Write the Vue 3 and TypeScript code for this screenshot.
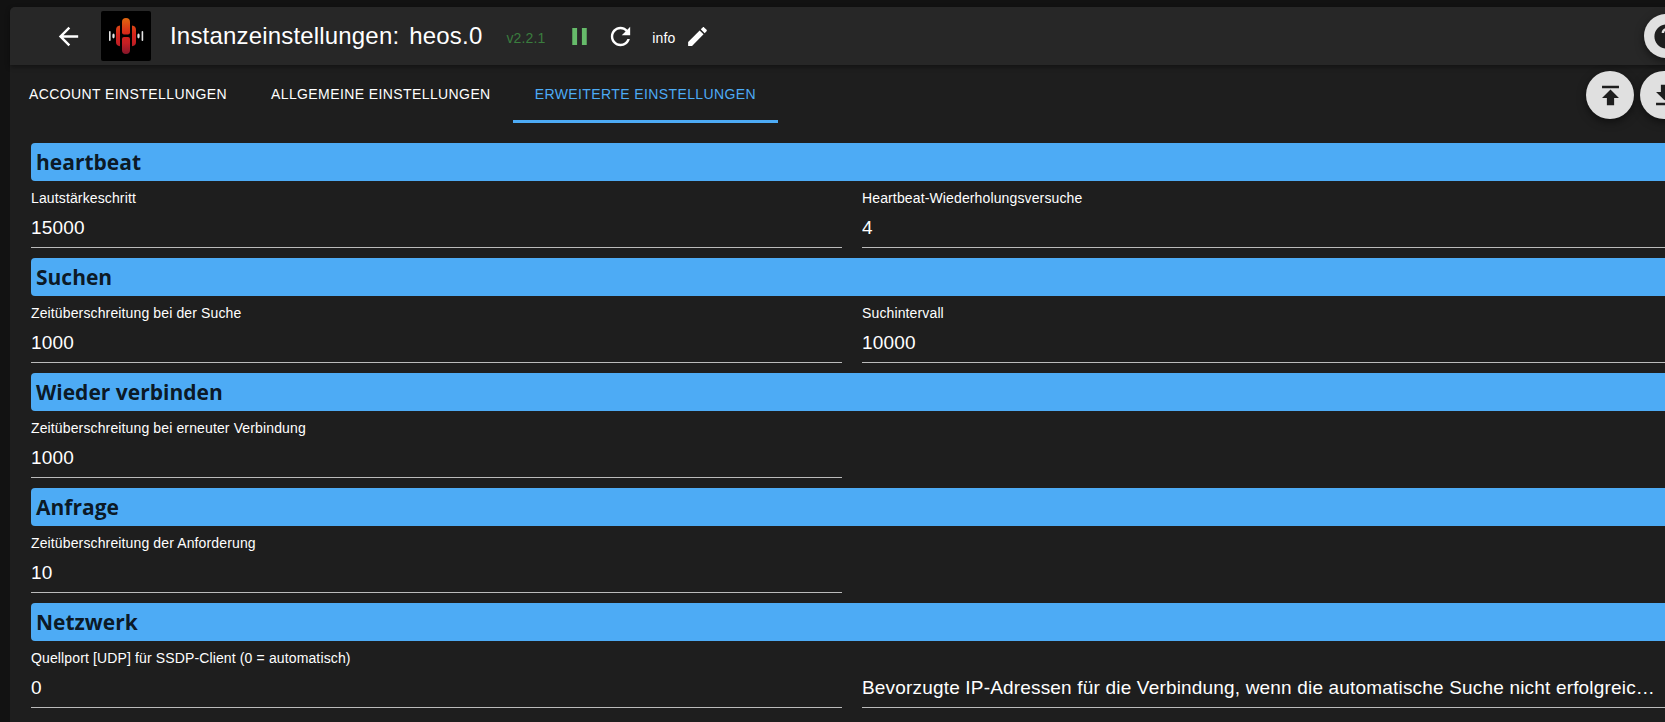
<script setup lang="ts">
import { ref } from 'vue'

interface Field {
  id: string
  label: string
  value: string
  floating?: boolean
}
interface Section {
  title: string
  fields: Field[]
}

const tabs = ['Account Einstellungen', 'Allgemeine Einstellungen', 'Erweiterte Einstellungen']
const activeTab = ref(2)

const sections = ref<Section[]>([
  {
    title: 'heartbeat',
    fields: [
      { id: 'heartbeatInterval', label: 'Lautstärkeschritt', value: '15000' },
      { id: 'heartbeatRetries', label: 'Heartbeat-Wiederholungsversuche', value: '4' },
    ],
  },
  {
    title: 'Suchen',
    fields: [
      { id: 'searchTimeout', label: 'Zeitüberschreitung bei der Suche', value: '1000' },
      { id: 'searchInterval', label: 'Suchintervall', value: '10000' },
    ],
  },
  {
    title: 'Wieder verbinden',
    fields: [{ id: 'reconnectTimeout', label: 'Zeitüberschreitung bei erneuter Verbindung', value: '1000' }],
  },
  {
    title: 'Anfrage',
    fields: [{ id: 'requestTimeout', label: 'Zeitüberschreitung der Anforderung', value: '10' }],
  },
  {
    title: 'Netzwerk',
    fields: [
      { id: 'sourcePort', label: 'Quellport [UDP] für SSDP-Client (0 = automatisch)', value: '0' },
      {
        id: 'preferredIps',
        label: 'Bevorzugte IP-Adressen für die Verbindung, wenn die automatische Suche nicht erfolgreic…',
        value: '',
        floating: true,
      },
    ],
  },
])
</script>

<template>
  <div class="page">
    <main class="panel">
      <header class="appbar">
        <button class="icon-btn back" type="button" aria-label="Zurück">
          <svg viewBox="0 0 24 24"><path d="M20 11H7.83l5.59-5.59L12 4l-8 8 8 8 1.41-1.41L7.83 13H20v-2z" /></svg>
        </button>
        <svg class="logo" viewBox="0 0 50 50" aria-hidden="true">
          <defs>
            <linearGradient id="flame" gradientUnits="userSpaceOnUse" x1="0" y1="7" x2="0" y2="43">
              <stop offset="0" stop-color="#e0680f" />
              <stop offset="0.45" stop-color="#d4241a" />
              <stop offset="0.7" stop-color="#c41f24" />
              <stop offset="1" stop-color="#86162a" />
            </linearGradient>
          </defs>
          <rect width="50" height="50" rx="2" fill="#000" />
          <g fill="url(#flame)">
            <path d="M21 11a4 4 0 0 1 8 0v10.500a2 2 0 0 1-2 2h-4a2 2 0 0 1-2-2z" />
            <path d="M21 28a2 2 0 0 1 2-2h4a2 2 0 0 1 2 2v11a4 4 0 0 1-8 0z" />
            <path d="M19 14.500v20.800q-4-.6-4-4.300V18.800q0-3.700 4-4.300z" />
            <path d="M31 14.500v20.800q4-.6 4-4.300V18.800q0-3.700-4-4.300z" />
          </g>
          <g fill="#e4e4e4">
            <rect x="8" y="20" width="1.600" height="10" rx="0.800" />
            <ellipse cx="12.500" cy="25" rx="1.200" ry="2.400" />
            <ellipse cx="37.500" cy="25" rx="1.200" ry="2.400" />
            <rect x="40.600" y="20" width="1.600" height="10" rx="0.800" />
          </g>
        </svg>
        <h1 class="title"><span>Instanzeinstellungen:</span><span>heos.0</span></h1>
        <span class="version">v2.2.1</span>
        <button class="icon-btn pause" type="button" aria-label="Anhalten">
          <svg viewBox="0 0 24 24"><path d="M6 19h4V5H6v14zm8-14v14h4V5h-4z" /></svg>
        </button>
        <button class="icon-btn reload" type="button" aria-label="Neu starten">
          <svg viewBox="0 0 24 24"><path d="M17.650 6.350C16.200 4.900 14.210 4 12 4c-4.420 0-7.990 3.580-7.990 8s3.570 8 7.990 8c3.730 0 6.840-2.550 7.730-6h-2.080c-.82 2.330-3.040 4-5.650 4-3.310 0-6-2.690-6-6s2.690-6 6-6c1.660 0 3.140.69 4.220 1.780L13 11h7V4l-2.350 2.350z" /></svg>
        </button>
        <span class="level">info</span>
        <button class="icon-btn edit" type="button" aria-label="Protokollstufe bearbeiten">
          <svg viewBox="0 0 24 24"><path d="M3 17.250V21h3.750L17.810 9.940l-3.750-3.750L3 17.250zM20.710 7.040c.39-.39.39-1.020 0-1.410l-2.340-2.340c-.39-.39-1.020-.39-1.410 0l-1.830 1.830 3.750 3.750 1.830-1.830z" /></svg>
        </button>
        <button class="fab help" type="button" aria-label="Hilfe">
          <svg viewBox="0 0 24 24"><path d="M12 2C6.480 2 2 6.480 2 12s4.480 10 10 10 10-4.480 10-10S17.520 2 12 2zm1 17h-2v-2h2v2zm2.070-7.750-.9.920C13.450 12.900 13 13.500 13 15h-2v-.5c0-1.100.45-2.100 1.170-2.830l1.240-1.260c.37-.36.59-.86.59-1.410 0-1.100-.9-2-2-2s-2 .9-2 2H8c0-2.210 1.790-4 4-4s4 1.790 4 4c0 .88-.36 1.680-.93 2.250z" /></svg>
        </button>
      </header>

      <div class="toolbar">
        <nav class="tabs" role="tablist">
          <button
            v-for="(tab, i) in tabs"
            :key="tab"
            class="tab"
            :class="{ active: i === activeTab }"
            type="button"
            role="tab"
            :aria-selected="i === activeTab"
            @click="activeTab = i"
          >
            {{ tab }}
          </button>
        </nav>
        <div class="actions">
          <button class="fab" type="button" aria-label="Importieren">
            <svg viewBox="0 0 24 24"><path d="M5 4v2h14V4H5zm0 10h4v6h6v-6h4l-7-7-7 7z" /></svg>
          </button>
          <button class="fab" type="button" aria-label="Exportieren">
            <svg viewBox="0 0 24 24"><path d="M19 9h-4V3H9v6H5l7 7 7-7zM5 18v2h14v-2H5z" /></svg>
          </button>
        </div>
      </div>

      <form class="form" @submit.prevent>
        <section v-for="section in sections" :key="section.title" class="section">
          <h2 class="heading">{{ section.title }}</h2>
          <div class="fields">
            <div v-for="field in section.fields" :key="field.id" class="field">
              <label v-if="!field.floating" class="label" :for="field.id">{{ field.label }}</label>
              <input
                :id="field.id"
                v-model="field.value"
                class="input"
                type="text"
                :placeholder="field.floating ? field.label : undefined"
                :aria-label="field.floating ? field.label : undefined"
              />
            </div>
          </div>
        </section>
      </form>
    </main>
  </div>
</template>

<style>
body {
  margin: 0;
  background: #121212;
}
</style>

<style scoped>
.page {
  box-sizing: border-box;
  min-height: 100vh;
  padding: 7px 0 0 10px;
  overflow: hidden;
  display: flex;
  background: #121212;
  color: #fff;
  font-family: 'Liberation Sans', Arial, sans-serif;
}
.panel {
  flex: 1;
  min-width: 0;
  margin-right: -32px;
  border-radius: 5px 0 0 0;
  background: #1e1e1e;
}
button {
  font: inherit;
  color: inherit;
  border: 0;
  padding: 0;
  background: none;
  cursor: pointer;
}
svg {
  display: block;
  fill: currentColor;
}
.appbar {
  display: flex;
  align-items: center;
  height: 58px;
  padding: 0 9px 0 44px;
  border-radius: 5px 0 0 0;
  background: #272727;
  box-shadow: 0 2px 5px rgba(0, 0, 0, 0.4);
}
.icon-btn svg {
  width: 29px;
  height: 29px;
}
.back {
  margin-right: 18px;
}
.logo {
  width: 50px;
  height: 50px;
}
.title {
  display: flex;
  gap: 10px;
  margin: 0 0 0 19px;
  font-size: 24px;
  line-height: 38px;
  font-weight: 400;
  letter-spacing: 0.0075em;
}
.version {
  margin: 3px 0 0 24px;
  font-size: 14px;
  letter-spacing: 0.00938em;
  color: #3a7d3e;
}
.pause {
  margin-left: 20px;
  color: #66bb6a;
}
.reload {
  margin-left: 12px;
}
.level {
  margin: 3px 10px 0 17px;
  font-size: 14px;
  letter-spacing: 0.00938em;
}
.edit svg {
  width: 25px;
  height: 25px;
}
.fab {
  display: grid;
  place-items: center;
  width: 48px;
  height: 48px;
  border-radius: 50%;
  background: #e0e0e0;
  color: #1e1e1e;
  box-shadow: 0 3px 8px rgba(0, 0, 0, 0.5);
}
.fab svg {
  width: 29px;
  height: 29px;
}
.help {
  width: 44px;
  height: 44px;
  margin-left: auto;
}
.toolbar {
  display: flex;
  justify-content: space-between;
  padding-right: 9px;
}
.tabs {
  display: flex;
  margin-left: -3px;
}
.tab {
  box-sizing: border-box;
  height: 58px;
  padding: 3px 22px 0;
  border-bottom: 3px solid transparent;
  font-size: 14px;
  letter-spacing: 0.02857em;
  text-transform: uppercase;
}
.tab.active {
  border-bottom-color: #4dabf5;
  color: #4dabf5;
}
.actions {
  display: flex;
  gap: 6px;
  padding-top: 6px;
}
.form {
  padding: 20px 24px 0 21px;
}
.section {
  padding-bottom: 10px;
}
.heading {
  margin: 0;
  padding: 1px 5px 0;
  border-radius: 4px;
  background: #4dabf5;
  color: rgba(0, 0, 0, 0.87);
  font-family: 'Segoe UI', 'Open Sans', sans-serif;
  font-size: 21px;
  font-weight: 700;
  line-height: 37px;
}
.fields {
  display: grid;
  grid-template-columns: 1fr 1fr;
  gap: 20px;
}
.field {
  display: flex;
  flex-direction: column;
  justify-content: flex-end;
  height: 67px;
}
.label {
  font-size: 14px;
  line-height: 20px;
  letter-spacing: 0.00938em;
}
.input {
  box-sizing: border-box;
  width: 100%;
  height: 40px;
  padding: 0;
  border: 0;
  border-bottom: 1px solid #bbb;
  border-radius: 0;
  outline: 0;
  background: transparent;
  color: inherit;
  font: 19px 'Liberation Sans', Arial, sans-serif;
  letter-spacing: 0.00938em;
  text-overflow: ellipsis;
}
.input::placeholder {
  color: #fff;
  opacity: 1;
}
</style>
